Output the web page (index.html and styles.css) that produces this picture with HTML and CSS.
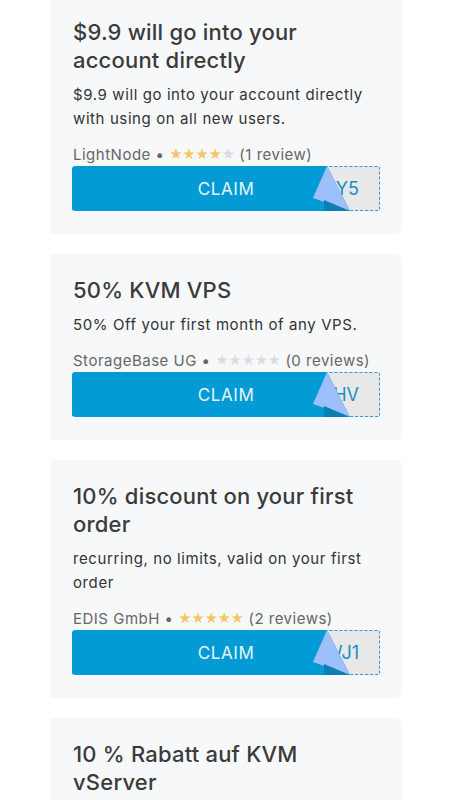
FILE: index.html
```html
<!DOCTYPE html>
<html lang="en">
<head>
    <meta charset="UTF-8">
    <meta name="viewport" content="width=device-width, initial-scale=1.0">
    <title>Coupons</title>
    <link rel="stylesheet" href="styles.css">
</head>
<body>
    <div class="list">
        <div class="card">
            <h2 class="title">$9.9 will go into your account directly</h2>
            <p class="desc">$9.9 will go into your account directly with using on all new users.</p>
            <div class="meta">LightNode • <span class="stars"><span class="on">★★★★</span>★</span> (1 review)</div>
            <div class="claim">
                <div class="code">ZY5</div>
                <div class="btn">CLAIM</div>
                <div class="fold"></div>
                <div class="shade"></div>
            </div>
        </div>

        <div class="card">
            <h2 class="title">50% KVM VPS</h2>
            <p class="desc">50% Off your first month of any VPS.</p>
            <div class="meta">StorageBase UG • <span class="stars">★★★★★</span> (0 reviews)</div>
            <div class="claim">
                <div class="code">HV</div>
                <div class="btn">CLAIM</div>
                <div class="fold"></div>
                <div class="shade"></div>
            </div>
        </div>

        <div class="card">
            <h2 class="title">10% discount on your first order</h2>
            <p class="desc">recurring, no limits, valid on your first order</p>
            <div class="meta">EDIS GmbH • <span class="stars"><span class="on">★★★★★</span></span> (2 reviews)</div>
            <div class="claim">
                <div class="code">WJ1</div>
                <div class="btn">CLAIM</div>
                <div class="fold"></div>
                <div class="shade"></div>
            </div>
        </div>

        <div class="card">
            <h2 class="title">10 % Rabatt auf KVM vServer</h2>
            <p class="desc">10 % Rabatt auf alle KVM vServer Tarife.</p>
            <div class="meta">EDIS GmbH • <span class="stars"><span class="on">★★★★★</span></span> (2 reviews)</div>
            <div class="claim">
                <div class="code">KV1</div>
                <div class="btn">CLAIM</div>
                <div class="fold"></div>
                <div class="shade"></div>
            </div>
        </div>
    </div>
</body>
</html>
```

FILE: styles.css
```css
body {
    margin: 0;
    background-color: #fff;
    font-family: Inter, "Noto Sans", sans-serif;
    color: #333;
}

.list {
    display: flex;
    flex-direction: column;
    gap: 20px;
    margin: -4px 48px 0 50px;
}

.card {
    background-color: #f7f8fa;
    border-radius: 4px;
    padding: 22px 22px 23px 23px;
}

.title {
    margin: 0;
    font-size: 22px;
    line-height: 28px;
    font-weight: 500;
    letter-spacing: 0.2px;
    color: #3b3b3b;
}

.desc {
    margin: 9px 0 0;
    font-size: 15px;
    line-height: 24px;
    letter-spacing: 0.6px;
    color: #333;
}

.meta {
    margin-top: 12px;
    font-size: 15px;
    line-height: 22px;
    letter-spacing: 0.5px;
    color: #666;
}

.stars {
    font-size: 13px;
    letter-spacing: -0.5px;
    color: #dcdcdc;
    vertical-align: 1px;
}

.stars .on {
    color: #f6c55e;
}

/* code box sits under the peeled button */
.claim {
    position: relative;
    height: 45px;
    margin-left: -1px;
}

.code {
    height: 100%;
    box-sizing: border-box;
    border: 1px dashed #2a9ad0;
    border-radius: 2px;
    background-color: #e8e8e8;
    display: flex;
    align-items: center;
    justify-content: flex-end;
    padding-right: 20px;
    font-size: 18px;
    color: #1b8fc4;
}

.btn {
    position: absolute;
    inset: 0;
    background-color: #039bd5;
    border-radius: 4px;
    clip-path: polygon(0 0, 255px 0, 278px 45px, 0 45px);
    display: flex;
    align-items: center;
    justify-content: center;
    font-size: 17px;
    letter-spacing: 0.6px;
    color: #e6f6fc;
}

.fold {
    position: absolute;
    left: 241px;
    top: 0;
    width: 37px;
    height: 45px;
    background-color: #9dbffb;
    clip-path: polygon(14px 0, 0 32px, 37px 45px);
}

.shade {
    position: absolute;
    left: 252px;
    top: 34px;
    width: 26px;
    height: 11px;
    background-color: #0b7fae;
    clip-path: polygon(0 0, 26px 11px, 0 11px);
}
```
